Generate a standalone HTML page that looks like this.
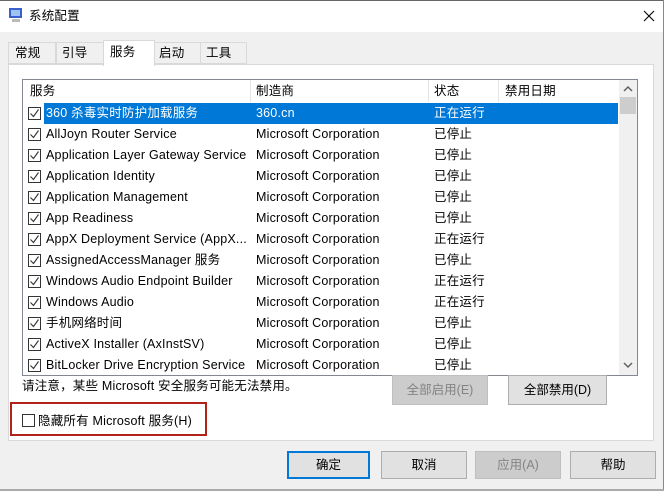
<!DOCTYPE html>
<html><head><meta charset="utf-8"><style>
*{margin:0;padding:0;box-sizing:border-box}
body{width:664px;height:491px;overflow:hidden;background:#f0f0f0;font-family:"Liberation Sans","Noto Sans CJK SC",sans-serif;font-size:12.5px;line-height:15px;color:#000;position:relative}
.a{position:absolute}
.t{white-space:nowrap;line-height:15px;height:15px;letter-spacing:0.2px}
.cb{position:absolute;width:13px;height:13px;border:1px solid #333;background:#fff}
.cb svg{position:absolute;left:0px;top:0px}
.btn{position:absolute;border:1px solid #adadad;background:#e1e1e1;text-align:center;font-size:12.5px}
</style></head><body>
<div class="a" style="left:0;top:0;width:664px;height:1px;background:#666"></div>
<div class="a" style="left:663px;top:0;width:1px;height:491px;background:#888"></div>
<div class="a" style="left:0;top:1px;width:663px;height:31px;background:#fff"></div>
<svg class="a" style="left:8px;top:7px" width="16" height="16"><rect x="1" y="1" width="13" height="10" fill="#3a5fcf"/><rect x="3" y="3" width="9" height="6" fill="#9fc3f0"/><rect x="4" y="12" width="8" height="3" fill="#bbb"/></svg>
<div class="a t" style="left:29px;top:9px">系统配置</div>
<svg class="a" style="left:643px;top:10px" width="12" height="12"><path d="M1 1L11 11M11 1L1 11" stroke="#000" stroke-width="1.1"/></svg>
<div class="a" style="left:8px;top:42px;width:48px;height:22px;border:1px solid #d9d9d9;background:#f0f0f0"></div>
<div class="a t" style="left:15px;top:46px">常规</div>
<div class="a" style="left:56px;top:42px;width:48px;height:22px;border:1px solid #d9d9d9;background:#f0f0f0"></div>
<div class="a t" style="left:62px;top:46px">引导</div>
<div class="a" style="left:154px;top:42px;width:47px;height:22px;border:1px solid #d9d9d9;background:#f0f0f0"></div>
<div class="a t" style="left:159px;top:46px">启动</div>
<div class="a" style="left:200px;top:42px;width:47px;height:22px;border:1px solid #d9d9d9;background:#f0f0f0"></div>
<div class="a t" style="left:206px;top:46px">工具</div>
<div class="a" style="left:8px;top:64px;width:646px;height:377px;background:#fff;border:1px solid #d9d9d9"></div>
<div class="a" style="left:103px;top:40px;width:52px;height:26px;background:#fff;border:1px solid #d9d9d9;border-bottom:none"></div>
<div class="a t" style="left:110px;top:45px">服务</div>
<div class="a" style="left:22px;top:79px;width:616px;height:297px;border:1px solid #828790;background:#fff;overflow:hidden">
<div class="a" style="left:227px;top:0;width:1px;height:22px;background:#e5e5e5"></div>
<div class="a" style="left:405px;top:0;width:1px;height:22px;background:#e5e5e5"></div>
<div class="a" style="left:475px;top:0;width:1px;height:22px;background:#e5e5e5"></div>
<div class="a t" style="left:7px;top:4px">服务</div>
<div class="a t" style="left:233px;top:4px">制造商</div>
<div class="a t" style="left:411px;top:4px">状态</div>
<div class="a t" style="left:482px;top:4px">禁用日期</div>
<div class="a" style="left:21px;top:23px;width:574px;height:21px;background:#0078d7"></div>
<div id="rows"></div>
<div class="a" style="left:596px;top:0;width:18px;height:295px;background:#f0f0f0"></div>
<svg class="a" style="left:600px;top:5px" width="10" height="8"><path d="M1 6L5 2L9 6" stroke="#606060" stroke-width="1.5" fill="none"/></svg>
<div class="a" style="left:597px;top:17px;width:16px;height:17px;background:#cdcdcd"></div>
<svg class="a" style="left:600px;top:281px" width="10" height="8"><path d="M1 2L5 6L9 2" stroke="#606060" stroke-width="1.5" fill="none"/></svg>
</div>
<div class="a t" style="left:22px;top:379px">请注意，某些 Microsoft 安全服务可能无法禁用。</div>
<div class="btn" style="left:392px;top:375px;width:96px;height:30px;line-height:28px;color:#838383;background:#cccccc;border-color:#bfbfbf">全部启用(E)</div>
<div class="btn" style="left:508px;top:375px;width:99px;height:30px;line-height:28px">全部禁用(D)</div>
<div class="a" style="left:10px;top:402px;width:197px;height:34px;border:2px solid #b3221a"></div>
<div class="cb" style="left:22px;top:414px"></div>
<div class="a t" style="left:38px;top:414px">隐藏所有 Microsoft 服务(H)</div>
<div class="btn" style="left:287px;top:451px;width:83px;height:28px;line-height:24px;border:2px solid #0078d7">确定</div>
<div class="btn" style="left:381px;top:451px;width:86px;height:28px;line-height:26px">取消</div>
<div class="btn" style="left:475px;top:451px;width:86px;height:28px;line-height:26px;color:#838383;background:#cccccc;border-color:#bfbfbf">应用(A)</div>
<div class="btn" style="left:570px;top:451px;width:86px;height:28px;line-height:26px">帮助</div>
<div class="a" style="left:0;top:489px;width:664px;height:2px;background:#aaa"></div>
<script>
var d=[["360 杀毒实时防护加载服务","360.cn","正在运行"],["AllJoyn Router Service","Microsoft Corporation","已停止"],["Application Layer Gateway Service","Microsoft Corporation","已停止"],["Application Identity","Microsoft Corporation","已停止"],["Application Management","Microsoft Corporation","已停止"],["App Readiness","Microsoft Corporation","已停止"],["AppX Deployment Service (AppX...","Microsoft Corporation","正在运行"],["AssignedAccessManager 服务","Microsoft Corporation","已停止"],["Windows Audio Endpoint Builder","Microsoft Corporation","正在运行"],["Windows Audio","Microsoft Corporation","正在运行"],["手机网络时间","Microsoft Corporation","已停止"],["ActiveX Installer (AxInstSV)","Microsoft Corporation","已停止"],["BitLocker Drive Encryption Service","Microsoft Corporation","已停止"]];
var h="";d.forEach(function(r,i){var y=23+i*21;var c=i==0?"#fff":"#000";
h+='<div class="cb" style="left:5px;top:'+(y+4)+'px"><svg width="11" height="11"><path d="M1.5 5.5L4.5 8.5L9.5 1.5" stroke="#333" stroke-width="1.1" fill="none"/></svg></div>';
h+='<div class="a t" style="left:23px;top:'+(y+3)+'px;color:'+c+'">'+r[0]+'</div>';
h+='<div class="a t" style="left:233px;top:'+(y+3)+'px;color:'+c+'">'+r[1]+'</div>';
h+='<div class="a t" style="left:411px;top:'+(y+3)+'px;color:'+c+'">'+r[2]+'</div>';});
document.getElementById("rows").outerHTML=h;
</script>
</body></html>
